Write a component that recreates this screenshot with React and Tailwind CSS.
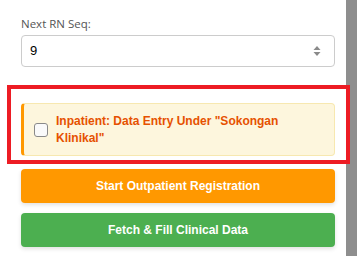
import React from "react";

export default function App() {
  return (
    <div className="flex w-[357px] h-[256px] overflow-hidden bg-white" style={{ fontFamily: '"Liberation Sans", Arial, sans-serif' }}>
      <div className="flex-1 flex flex-col pl-[21px] pr-[11px] pt-[17px]">
        <label className="text-[11.5px] leading-[14px] text-[#555]" style={{ fontFamily: '"Open Sans", sans-serif' }}>Next RN Seq:</label>
        <div className="mt-[4px] h-[32px] border border-[#ccc] rounded-[4px] flex items-center pl-[8px] pr-[12px]">
          <span className="flex-1 text-[13px] text-black">9</span>
          <svg width="8" height="12" viewBox="0 0 8 12" className="mr-[1px]">
            <path d="M4 1 L7.5 5 L0.5 5 Z" fill="#8a8a8a" />
            <path d="M4 11 L7.5 7 L0.5 7 Z" fill="#8a8a8a" />
          </svg>
        </div>
        <div className="relative mt-[36px]">
          <div className="absolute left-[-14px] right-[-15px] top-[-18px] bottom-[-8px] border-[4px] border-[#ed1c24] pointer-events-none" />
          <div className="h-[53px] flex items-center bg-[#fdf6dd] border border-[#f7e8b0] border-l-[3px] border-l-[#ff9800] rounded-[4px] pl-[10px]">
            <div className="w-[14px] h-[14px] rounded-[3px] border-[1.5px] border-[#8a8a8a] bg-[#fafafa] shrink-0" />
            <div className="ml-[8px] text-[12px] leading-[17px] font-bold text-[#e65100]">
              Inpatient: Data Entry Under "Sokongan<br />Klinikal"
            </div>
          </div>
        </div>
        <button className="mt-[13px] h-[34px] w-full rounded-[4px] bg-[#ff9800] text-white text-[12px] font-bold shadow-[0_2px_4px_rgba(0,0,0,0.12)]">
          Start Outpatient Registration
        </button>
        <button className="mt-[10px] h-[34px] w-full rounded-[4px] bg-[#4caf50] text-white text-[12px] font-bold shadow-[0_2px_4px_rgba(0,0,0,0.12)]">
          Fetch &amp; Fill Clinical Data
        </button>
      </div>
      <div className="w-[11px] h-full bg-[#8e8e8e]" />
    </div>
  );
}
